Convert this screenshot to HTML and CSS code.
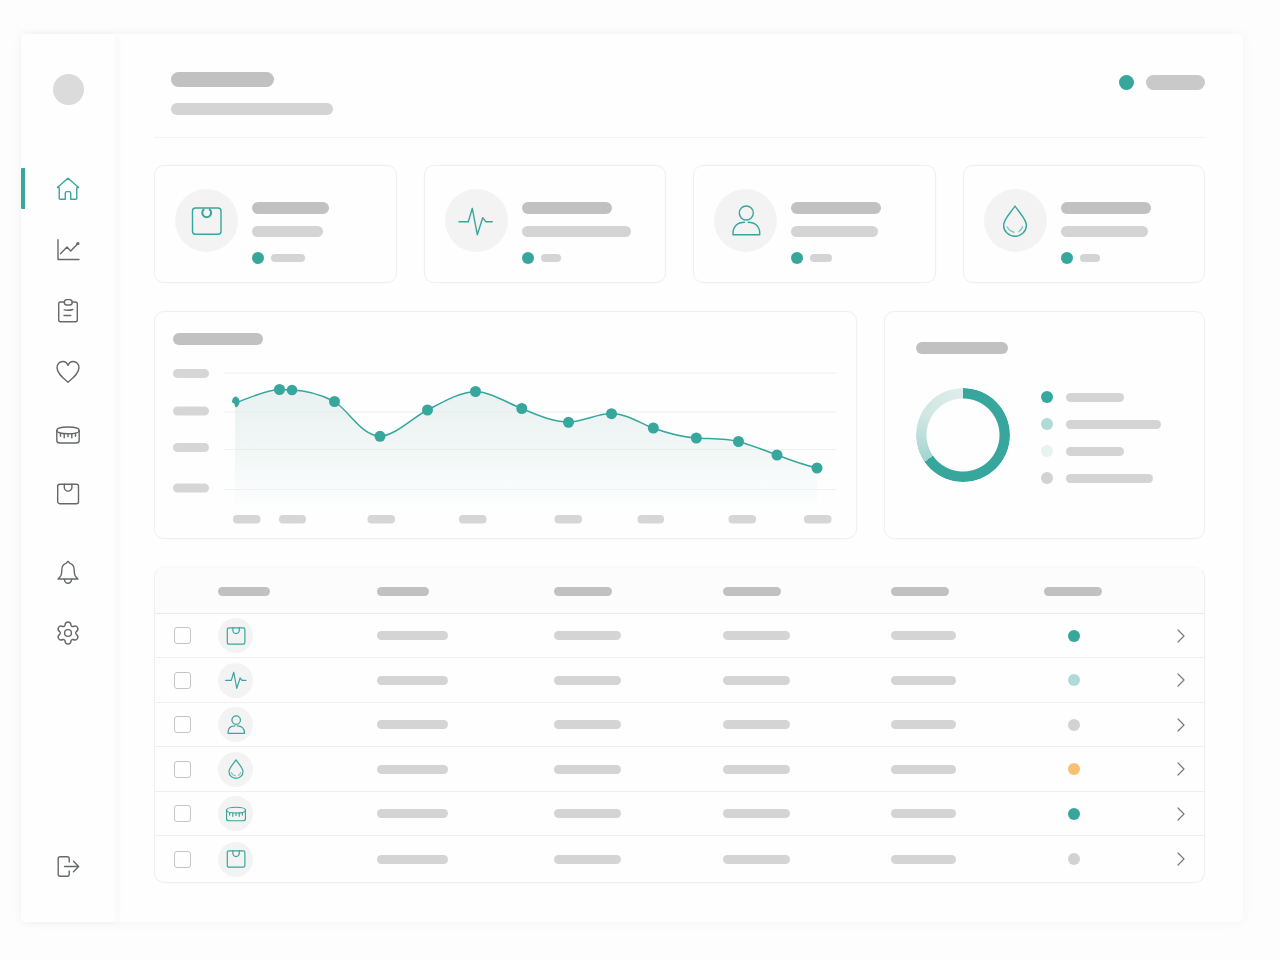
FILE: index.html
```html
<!DOCTYPE html>
<html lang="en">
<head>
<meta charset="utf-8">
<meta name="viewport" content="width=device-width, initial-scale=1">
<title>Health dashboard</title>
<link rel="stylesheet" href="styles.css">
</head>
<body>
<svg class="sprite" aria-hidden="true">
  <symbol id="home" viewBox="0 0 24 24"><path d="M3.2 10.600H1.400L12 1.200l10.600 9.400h-1.800M3.200 10.600v10.600q0 1.100 1.100 1.100h5v-6.200q0-1.500 1.500-1.500h2.400q1.500 0 1.500 1.500v6.200h5q1.100 0 1.100-1.100V10.600"/></symbol>
  <symbol id="trend" viewBox="0 0 24 24"><path d="M2 1.700v19.800h21M4.500 15.700 11 9l3.700 4 6.800-7"/><circle cx="21.900" cy="5.600" r="1"/></symbol>
  <symbol id="clipboard" viewBox="0 0 24 24"><path d="M8.500 3H4.500q-1.800 0-1.800 1.800v16q0 1.900 1.800 1.900h15q1.800 0 1.800-1.900v-16Q21.300 3 19.500 3H16"/><path d="M10.500.6h3.500q2.200.4 2.200 2.600 0 2.600-2.200 2.800h-3.500q-2.200-.2-2.200-2.800 0-2.200 2.200-2.600zM8.300 10.900q4 1 8.500-.4M8 16.500h6.800"/></symbol>
  <symbol id="heart" viewBox="0 0 24 24"><path d="M12 22.300C7 18 1 13.500 1 7.800 1 4 3.600 1.500 6.700 1.500c2.400 0 4.300 1.200 5.300 3.900 1-2.700 2.900-3.900 5.300-3.900C20.400 1.500 23 4 23 7.800c0 5.700-6 10.200-11 14.500z"/></symbol>
  <symbol id="tape" viewBox="0 0 24 24"><path d="M.8 7.500C.8 5.300 5.500 4 12 4s11.200 1.300 11.200 3.500S18.500 10.800 12 10.800.8 9.700.8 7.500z"/><path d="M.8 7.500v9.700q0 2.800 3 2.800h16.400q3 0 3-2.800V7.500M4.500 10.300v3M8.200 10.800v4M12 10.800v3M15.800 10.800v4M19.500 10.300v3"/></symbol>
  <symbol id="scale" viewBox="0 0 24 24"><rect x="1.700" y="2.300" width="20.800" height="19.400" rx="2"/><path d="M8.300 2.300v3a3.800 3.800 0 0 0 7.600 0v-3"/></symbol>
  <symbol id="bell" viewBox="0 0 24 24"><path d="M12 1.500c-.9 0-1 1.300-1.800 1.700C7 4.500 5.800 7 5.800 10c0 5-1 6.500-3.800 9h20c-2.800-2.500-3.800-4-3.800-9 0-3-1.200-5.500-4.400-6.800-.8-.4-.9-1.700-1.800-1.700zM8.500 19v.8a3.500 3.500 0 0 0 7 0V19"/></symbol>
  <symbol id="gear" viewBox="0 0 24 24"><path d="M8.900 4.400C9.100 2 10.200 1 12 1s2.900 1 3.100 3.400Q15.600 5.800 17.100 5.500C19.200 4.500 20.600 4.900 21.500 6.500s.6 3-1.400 4.400Q19.200 12 20.100 13.100C22.100 14.500 22.400 15.900 21.500 17.500s-2.300 2-4.400 1Q15.600 18.200 15.100 19.600C14.900 22 13.800 23 12 23s-2.900-1-3.100-3.400Q8.400 18.200 6.900 18.500C4.800 19.500 3.400 19.100 2.500 17.500s-.6-3 1.400-4.400Q4.800 12 3.900 10.900C1.900 9.500 1.600 8.100 2.500 6.500s2.300-2 4.400-1Q8.400 5.800 8.900 4.400z"/><circle cx="12" cy="12" r="3.400"/></symbol>
  <symbol id="logout" viewBox="0 0 24 24"><path d="M13.200 7V3.700q0-2-1.700-2H4.200q-2 0-2 2v15.600q0 2 2 2h7.300q1.700 0 1.700-2V16M8.500 11.500h14M17.500 6.300l5.200 5.200-5.200 5.200"/></symbol>
  <symbol id="scale-large" viewBox="0 0 36 36"><rect x="3.500" y="5" width="28.500" height="26.300" rx="3"/><path class="dial" d="M14.700 6.600a4.400 4.400 0 1 0 6 0"/></symbol>
  <symbol id="pulse" viewBox="0 0 36 36"><path d="M1 18.700h9.300l4-13.400 5 26.400 5.400-17 3 4h6.600"/></symbol>
  <symbol id="person" viewBox="0 0 36 36"><circle cx="18.300" cy="10" r="7"/><path d="M16.500 19.300C9.500 19.300 5 23.500 5 30v1.700h26.700V30c0-6.500-4.500-10.700-11.500-10.700"/></symbol>
  <symbol id="drop" viewBox="0 0 36 36"><path d="M18 3C14 9.500 6.600 16 6.600 22.300a11.400 11 0 0 0 22.800 0C29.400 16 22 9.500 18 3z"/><path class="faint" d="M10.300 24q2 4 6.700 5.200M22 28.500q2.500-1.500 3.500-4.500"/></symbol>
  <symbol id="chevron" viewBox="0 0 24 24"><path d="M9 6l6 6-6 6"/></symbol>
</svg>

<div class="frame">
  <aside class="sidebar">
    <span class="avatar"></span>
    <nav class="nav" aria-label="Main">
      <a class="nav-item active" href="#" aria-label="Home"><svg viewBox="0 0 24 24"><use href="#home"/></svg></a>
      <a class="nav-item" href="#" aria-label="Trends"><svg viewBox="0 0 24 24"><use href="#trend"/></svg></a>
      <a class="nav-item" href="#" aria-label="Records"><svg viewBox="0 0 24 24"><use href="#clipboard"/></svg></a>
      <a class="nav-item" href="#" aria-label="Heart"><svg viewBox="0 0 24 24"><use href="#heart"/></svg></a>
      <a class="nav-item" href="#" aria-label="Measurements"><svg viewBox="0 -2 24 24"><use href="#tape" width="24" height="24"/></svg></a>
      <a class="nav-item" href="#" aria-label="Weight"><svg viewBox="0 0 24 24"><use href="#scale" width="24" height="24"/></svg></a>
    </nav>
    <nav class="nav nav-tools" aria-label="Tools">
      <a class="nav-item" href="#" aria-label="Notifications"><svg viewBox="0 0 24 24"><use href="#bell"/></svg></a>
      <a class="nav-item" href="#" aria-label="Settings"><svg viewBox="0 0 24 24"><use href="#gear"/></svg></a>
    </nav>
    <a class="nav-item logout" href="#" aria-label="Log out"><svg viewBox="0 0 24 24"><use href="#logout"/></svg></a>
  </aside>

  <main class="main">
    <header class="header">
      <div class="heading">
        <span class="bar bar-xl dark w-103"></span>
        <span class="bar bar-m w-162"></span>
      </div>
      <div class="user"><span class="dot dot-l teal"></span><span class="bar bar-xl mid w-59"></span></div>
    </header>

    <section class="stats">
      <article class="card stat">
        <span class="badge"><svg><use href="#scale-large"/></svg></span>
        <div class="stat-body"><span class="bar bar-m dark w-77"></span><span class="bar bar-s w-71"></span>
          <div class="stat-note"><span class="dot teal"></span><span class="bar bar-xs w-34"></span></div></div>
      </article>
      <article class="card stat">
        <span class="badge"><svg><use href="#pulse"/></svg></span>
        <div class="stat-body"><span class="bar bar-m dark w-90"></span><span class="bar bar-s w-109"></span>
          <div class="stat-note"><span class="dot teal"></span><span class="bar bar-xs w-20"></span></div></div>
      </article>
      <article class="card stat">
        <span class="badge"><svg><use href="#person"/></svg></span>
        <div class="stat-body"><span class="bar bar-m dark w-90"></span><span class="bar bar-s w-87"></span>
          <div class="stat-note"><span class="dot teal"></span><span class="bar bar-xs w-22"></span></div></div>
      </article>
      <article class="card stat">
        <span class="badge"><svg><use href="#drop"/></svg></span>
        <div class="stat-body"><span class="bar bar-m dark w-90"></span><span class="bar bar-s w-87"></span>
          <div class="stat-note"><span class="dot teal"></span><span class="bar bar-xs w-20"></span></div></div>
      </article>
    </section>

    <section class="charts">
      <article class="card trend">
        <span class="bar bar-m dark w-90"></span>
        <svg class="plot" viewBox="173 365 663 160" role="img" aria-label="Trend">
          <defs><linearGradient id="fade" x1="0" y1="0" x2="0" y2="1"><stop offset="0" stop-color="#e8f2f1"/><stop offset=".45" stop-color="#f0f6f5"/><stop offset="1" stop-color="#fdfefe"/></linearGradient></defs>
          <path fill="url(#fade)" d="M235 403C250 398 265 390 279.500 389.500L292 390C308 390.500 320 394 334.500 401.500C350 412 362 436 380 436C395 436 412 418 427.500 410C443 402 460 392 475.500 391.500C490 392 506 402 521.500 408.500C537 415 553 422 568.500 422C583 422 597 413.500 611.500 413.500C626 413.500 640 423 653 428C667 433 682 437 696 438C710 439 724 438 738.500 441.500C751 445 764 450 777 455C790 460 804 465 817 468V508H235z"/>
          <path class="grid-line" d="M225 373H836M225 412H836M225 449.500H836M225 489.500H836"/>
          <path class="curve" d="M235 403C250 398 265 390 279.500 389.500L292 390C308 390.500 320 394 334.500 401.500C350 412 362 436 380 436C395 436 412 418 427.500 410C443 402 460 392 475.500 391.500C490 392 506 402 521.500 408.500C537 415 553 422 568.500 422C583 422 597 413.500 611.500 413.500C626 413.500 640 423 653 428C667 433 682 437 696 438C710 439 724 438 738.500 441.500C751 445 764 450 777 455C790 460 804 465 817 468"/>
          <g class="points">
            <path d="M232 401q1-4.500 4-4.500 3.500 1.500 3.500 5 0 4-3.500 6-1.500-1-1.500-4-2.500 0-2.500-2.500z"/>
            <circle cx="279.500" cy="389.500" r="5.500"/><circle cx="292" cy="390" r="5.300"/><circle cx="334.500" cy="401.500" r="5.500"/><circle cx="380" cy="436.300" r="5.500"/><circle cx="427.500" cy="410" r="5.500"/><circle cx="475.500" cy="391.500" r="5.500"/><circle cx="521.800" cy="408.500" r="5.500"/><circle cx="568.500" cy="422.300" r="5.500"/><circle cx="611.500" cy="413.700" r="5.500"/><circle cx="653.300" cy="428" r="5.500"/><circle cx="696.300" cy="438" r="5.500"/><circle cx="738.500" cy="441.500" r="5.500"/><circle cx="777" cy="455" r="5.500"/><circle cx="817" cy="468" r="5.500"/>
          </g>
          <g class="ticks">
            <rect x="173" y="369" width="36" height="9" rx="4.500"/><rect x="173" y="406.500" width="36" height="9" rx="4.500"/><rect x="173" y="443" width="36" height="9" rx="4.500"/><rect x="173" y="483.500" width="36" height="9" rx="4.500"/>
            <rect x="233" y="515" width="27.500" height="8.500" rx="4"/><rect x="279" y="515" width="27" height="8.500" rx="4"/><rect x="367.500" y="515" width="27.500" height="8.500" rx="4"/><rect x="459" y="515" width="27.500" height="8.500" rx="4"/><rect x="554.500" y="515" width="27.500" height="8.500" rx="4"/><rect x="637.500" y="515" width="26.500" height="8.500" rx="4"/><rect x="728.500" y="515" width="27.500" height="8.500" rx="4"/><rect x="804" y="515" width="27.500" height="8.500" rx="4"/>
          </g>
        </svg>
      </article>
      <article class="card share">
        <span class="bar bar-m dark w-92"></span>
        <div class="share-body">
          <div class="donut"></div>
          <ul class="legend">
            <li><span class="dot teal"></span><span class="bar bar-t w-58"></span></li>
            <li><span class="dot mint"></span><span class="bar bar-t w-95"></span></li>
            <li><span class="dot pale"></span><span class="bar bar-t w-58"></span></li>
            <li><span class="dot grey"></span><span class="bar bar-t w-87"></span></li>
          </ul>
        </div>
      </article>
    </section>

    <section class="card table-card">
      <table class="table">
        <colgroup><col class="c-check"><col class="c-icon"><col class="c-a"><col class="c-b"><col class="c-c"><col class="c-d"><col class="c-status"><col class="c-more"></colgroup>
        <thead><tr><th></th><th><span class="bar bar-t dark w-52"></span></th><th><span class="bar bar-t dark w-52"></span></th><th><span class="bar bar-t dark w-58"></span></th><th><span class="bar bar-t dark w-58"></span></th><th><span class="bar bar-t dark w-58"></span></th><th><span class="bar bar-t dark w-58"></span></th><th></th></tr></thead>
        <tbody>
          <tr><td><input type="checkbox" aria-label="Select row 1"></td><td><span class="badge small"><svg viewBox="-1 -1 26 26"><use href="#scale" width="24" height="24"/></svg></span></td><td><span class="bar bar-t w-71"></span></td><td><span class="bar bar-t w-67"></span></td><td><span class="bar bar-t w-67"></span></td><td><span class="bar bar-t w-65"></span></td><td class="status"><span class="dot teal"></span></td><td class="more"><button type="button" aria-label="Open row 1"><svg><use href="#chevron"/></svg></button></td></tr>
          <tr><td><input type="checkbox" aria-label="Select row 2"></td><td><span class="badge small"><svg><use href="#pulse"/></svg></span></td><td><span class="bar bar-t w-71"></span></td><td><span class="bar bar-t w-67"></span></td><td><span class="bar bar-t w-67"></span></td><td><span class="bar bar-t w-65"></span></td><td class="status"><span class="dot mint"></span></td><td class="more"><button type="button" aria-label="Open row 2"><svg><use href="#chevron"/></svg></button></td></tr>
          <tr><td><input type="checkbox" aria-label="Select row 3"></td><td><span class="badge small"><svg><use href="#person"/></svg></span></td><td><span class="bar bar-t w-71"></span></td><td><span class="bar bar-t w-67"></span></td><td><span class="bar bar-t w-67"></span></td><td><span class="bar bar-t w-65"></span></td><td class="status"><span class="dot grey"></span></td><td class="more"><button type="button" aria-label="Open row 3"><svg><use href="#chevron"/></svg></button></td></tr>
          <tr><td><input type="checkbox" aria-label="Select row 4"></td><td><span class="badge small"><svg><use href="#drop"/></svg></span></td><td><span class="bar bar-t w-71"></span></td><td><span class="bar bar-t w-67"></span></td><td><span class="bar bar-t w-67"></span></td><td><span class="bar bar-t w-65"></span></td><td class="status"><span class="dot amber"></span></td><td class="more"><button type="button" aria-label="Open row 4"><svg><use href="#chevron"/></svg></button></td></tr>
          <tr><td><input type="checkbox" aria-label="Select row 5"></td><td><span class="badge small"><svg viewBox="-1 -1 26 26"><use href="#tape" width="24" height="24"/></svg></span></td><td><span class="bar bar-t w-71"></span></td><td><span class="bar bar-t w-67"></span></td><td><span class="bar bar-t w-67"></span></td><td><span class="bar bar-t w-65"></span></td><td class="status"><span class="dot teal"></span></td><td class="more"><button type="button" aria-label="Open row 5"><svg><use href="#chevron"/></svg></button></td></tr>
          <tr><td><input type="checkbox" aria-label="Select row 6"></td><td><span class="badge small"><svg viewBox="-1 -1 26 26"><use href="#scale" width="24" height="24"/></svg></span></td><td><span class="bar bar-t w-71"></span></td><td><span class="bar bar-t w-67"></span></td><td><span class="bar bar-t w-67"></span></td><td><span class="bar bar-t w-65"></span></td><td class="status"><span class="dot grey"></span></td><td class="more"><button type="button" aria-label="Open row 6"><svg><use href="#chevron"/></svg></button></td></tr>
        </tbody>
      </table>
    </section>
  </main>
</div>
</body>
</html>
```
FILE: styles.css
```css
:root {
  --teal: #37a69c;
  --line: #f0f0f0;
  --bar: #d4d4d4;
  --bar-dark: #c1c1c1;
}

* { box-sizing: border-box; }

body {
  margin: 0;
  min-height: 100vh;
  display: flex;
  padding: 34px 37px 38px 21px;
  background: #fdfdfd;
  font-family: Inter, "Liberation Sans", sans-serif;
}

.sprite { position: absolute; width: 0; height: 0; }

svg { display: block; fill: none; stroke: currentColor; stroke-linecap: round; stroke-linejoin: round; }
symbol path, symbol circle, symbol rect, symbol ellipse { vector-effect: non-scaling-stroke; }
.faint { opacity: .6; }
.dial { stroke-width: 2; }

.frame {
  flex: 1;
  display: flex;
  background: #fefefe;
  border-radius: 4px;
  box-shadow: 0 0 12px rgba(0, 0, 0, .045);
}

/* Sidebar */
.sidebar {
  flex: none;
  width: 94px;
  display: flex;
  flex-direction: column;
  padding: 40px 0 35px;
  box-shadow: 2px 0 8px rgba(0, 0, 0, .035);
}
.avatar { width: 31px; height: 31px; margin-left: 32px; border-radius: 50%; background: #dbdbdb; }
.nav { display: flex; flex-direction: column; gap: 20px; margin-top: 63px; }
.nav-tools { margin-top: 37px; }
.nav-item {
  display: flex;
  align-items: center;
  height: 41px;
  padding-left: 31px;
  border-left: 4px solid transparent;
  border-radius: 1px;
  color: #66686a;
}
.nav-item svg { width: 24px; height: 24px; stroke-width: 1.4; }
.nav-item.active { border-left-color: var(--teal); color: var(--teal); }
.logout { margin-top: auto; }

/* Placeholder shapes */
.bar { display: block; border-radius: 8px; background: var(--bar); }
.bar.dark { background: var(--bar-dark); }
.bar.mid { background: #c9c9c9; }
.bar-xl { height: 15px; }
.bar-m { height: 12px; }
.bar-s { height: 11px; }
.bar-t { height: 9px; }
.bar-xs { height: 8px; }
.w-20 { width: 20px; }
.w-22 { width: 22px; }
.w-34 { width: 34px; }
.w-52 { width: 52px; }
.w-58 { width: 58px; }
.w-59 { width: 59px; }
.w-65 { width: 65px; }
.w-67 { width: 67px; }
.w-71 { width: 71px; }
.w-77 { width: 77px; }
.w-87 { width: 87px; }
.w-90 { width: 90px; }
.w-92 { width: 92px; }
.w-95 { width: 95px; }
.w-103 { width: 103px; }
.w-109 { width: 109px; }
.w-162 { width: 162px; }

.dot { display: block; flex: none; width: 12px; height: 12px; border-radius: 50%; }
.dot-l { width: 15px; height: 15px; }
.teal { background: var(--teal); }
.mint { background: #b0dad5; }
.pale { background: #e6f3f0; }
.grey { background: #d2d2d2; }
.amber { background: #f8c072; }

/* Main column */
.main { flex: 1; min-width: 0; padding: 38px 38px 39px 39px; }
.header {
  display: flex;
  justify-content: space-between;
  align-items: flex-start;
  padding: 0 0 22px 17px;
  border-bottom: 1px solid #f3f3f3;
}
.heading { display: flex; flex-direction: column; gap: 16px; }
.user { display: flex; gap: 12px; padding-top: 3px; }

.card { border: 1px solid var(--line); border-radius: 10px; box-shadow: 0 0 2px rgba(0, 0, 0, .03); }

.stats { display: grid; grid-template-columns: repeat(4, 1fr); gap: 27px; margin-top: 27px; }
.stat { display: flex; gap: 14px; padding: 23px 20px 18px; }
.badge {
  flex: none;
  display: grid;
  place-items: center;
  width: 63px;
  height: 63px;
  border-radius: 50%;
  background: #f3f3f3;
  color: var(--teal);
}
.badge svg { width: 36px; height: 36px; stroke-width: 1.4; }
.stat-body { padding-top: 13px; }
.stat-body .bar-s { margin-top: 12px; }
.stat-note { display: flex; align-items: center; gap: 7px; margin-top: 15px; }

.charts { display: grid; grid-template-columns: 703fr 321fr; gap: 27px; margin-top: 28px; }
.trend { padding: 21px 20px 13px 18px; }
.plot { width: 100%; margin-top: 20px; stroke: none; }
.grid-line { stroke: #e6ebea; stroke-dasharray: 3 1; opacity: .75; }
.curve { stroke: var(--teal); stroke-width: 1.5; }
.points { fill: var(--teal); }
.ticks { fill: #d6d6d6; }

.share { padding: 30px 31px; }
.share-body { display: flex; align-items: flex-start; gap: 31px; margin-top: 34px; }
.donut {
  flex: none;
  width: 94px;
  height: 94px;
  border-radius: 50%;
  background: conic-gradient(var(--teal) 235deg, #a3d5d0 235deg, #cfe6e3 295deg, #deedeb 360deg);
  mask: radial-gradient(circle, transparent 36px, #000 37px);
}
.legend { display: grid; gap: 15px; margin: 0; padding: 3px 0 0; list-style: none; }
.legend li { display: flex; align-items: center; gap: 13px; }

/* Table */
.table-card { margin-top: 28px; border-top-color: #f9f9f9; overflow: hidden; }
.table { width: 100%; table-layout: fixed; border-collapse: separate; border-spacing: 0; }
.c-check { width: 63px; }
.c-icon { width: 159px; }
.c-a { width: 177px; }
.c-b { width: 169px; }
.c-c { width: 168px; }
.c-d { width: 153px; }
.c-status { width: 60px; }
.c-more { width: 100px; }
th, td { padding: 0; vertical-align: middle; }
th { height: 46px; padding-top: 2px; background: #fcfcfc; border-bottom: 1px solid #ebebeb; }
td { height: 44px; border-bottom: 1px solid var(--line); }
tr:nth-child(even) td { height: 45px; }
tr:last-child td { height: 46px; border-bottom: 0; }
.badge.small { width: 35px; height: 35px; }
.badge.small svg { width: 22px; height: 22px; stroke-width: 1.2; }
.status .dot { margin: 0 auto; }
input[type="checkbox"] {
  appearance: none;
  display: block;
  width: 17px;
  height: 17px;
  margin: 0 0 0 19px;
  border: 1px solid #c4c4c4;
  border-radius: 3px;
  background: #fefefe;
}
input[type="checkbox"]:checked { background: var(--teal); }
.more button { display: block; margin: 0 11px 0 auto; padding: 0; border: 0; background: none; color: #7a7a7a; }
.more svg { width: 24px; height: 24px; stroke-width: 1.2; }
```
